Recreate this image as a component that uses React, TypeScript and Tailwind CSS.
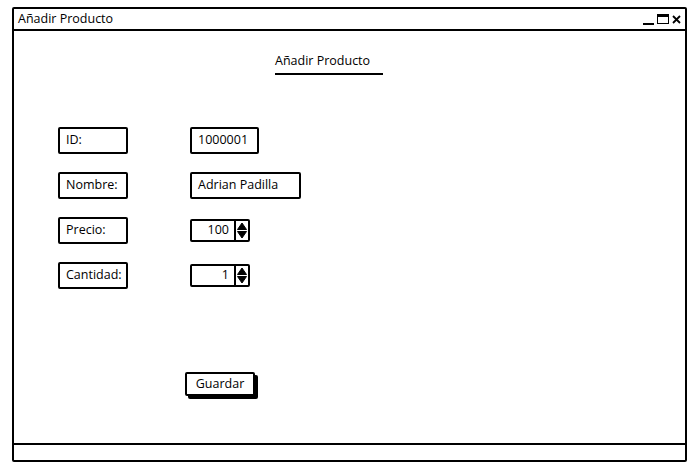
import React from "react";

function Spinner({ value }: { value: string }) {
  return (
    <div className="flex h-[23px] w-[60px] items-stretch border-2 border-black rounded-[2px] bg-white">
      <div className="flex flex-1 items-center justify-end pr-[5px]">{value}</div>
      <div className="flex w-[14px] items-center justify-center border-l-2 border-black">
        <svg width="10" height="17" viewBox="0 0 10 17">
          <path d="M5 1 L9.5 7.5 L0.5 7.5 Z" fill="#000" strokeLinejoin="round" stroke="#000" strokeWidth="1" />
          <path d="M5 16 L9.5 9.5 L0.5 9.5 Z" fill="#000" strokeLinejoin="round" stroke="#000" strokeWidth="1" />
        </svg>
      </div>
    </div>
  );
}

function Label({ text }: { text: string }) {
  return (
    <div className="flex h-[27px] w-[70px] items-center border-2 border-black rounded-[2px] pl-[6px]">
      {text}
    </div>
  );
}

function Field({ text, w }: { text: string; w: string }) {
  return (
    <div className={`flex h-[27px] items-center border-2 border-black rounded-[2px] pl-[6px] ${w}`}>
      {text}
    </div>
  );
}

export default function App() {
  return (
    <div
      className="h-[473px] w-[695px] bg-white pl-[12px] pt-[7px] text-[12.5px] text-black"
      style={{ fontFamily: '"Open Sans", "Noto Sans", sans-serif' }}
    >
      <div className="flex h-[455px] w-[675px] flex-col border-2 border-black rounded-[2px]">
        <div className="flex h-[22px] items-center justify-between border-b-2 border-black pl-[4px] pr-[4px]">
          <span>Añadir Producto</span>
          <div className="flex items-center gap-[3px]">
            <div className="mt-[9px] h-[2px] w-[11px] bg-black" />
            <div className="h-[10px] w-[12px] border-[1.5px] border-t-[3px] border-black" />
            <svg width="9" height="9" viewBox="0 0 9 9">
              <path d="M1 1 L8 8 M8 1 L1 8" stroke="#000" strokeWidth="1.8" />
            </svg>
          </div>
        </div>
        <div className="flex flex-1 flex-col">
          <div className="ml-[261px] mt-[22px] flex w-[108px] flex-col">
            <span className="leading-[16px]">Añadir Producto</span>
            <div className="mt-[4px] h-[2px] w-[108px] bg-black" />
          </div>
          <div className="ml-[44px] mt-[52px] flex flex-col gap-[18px]">
            <div className="flex items-center gap-[62px]">
              <Label text="ID:" />
              <Field text="1000001" w="w-[69px]" />
            </div>
            <div className="flex items-center gap-[62px]">
              <Label text="Nombre:" />
              <Field text="Adrian Padilla" w="w-[111px]" />
            </div>
            <div className="flex items-center gap-[62px]">
              <Label text="Precio:" />
              <Spinner value="100" />
            </div>
            <div className="flex items-center gap-[62px]">
              <Label text="Cantidad:" />
              <Spinner value="1" />
            </div>
          </div>
          <div className="ml-[171px] mt-[83px]">
            <div className="flex h-[24px] w-[70px] items-center justify-center border-2 border-black rounded-[2px] bg-white shadow-[3px_3px_0_#000]">
              Guardar
            </div>
          </div>
        </div>
        <div className="h-[17px] border-t-2 border-black" />
      </div>
    </div>
  );
}
